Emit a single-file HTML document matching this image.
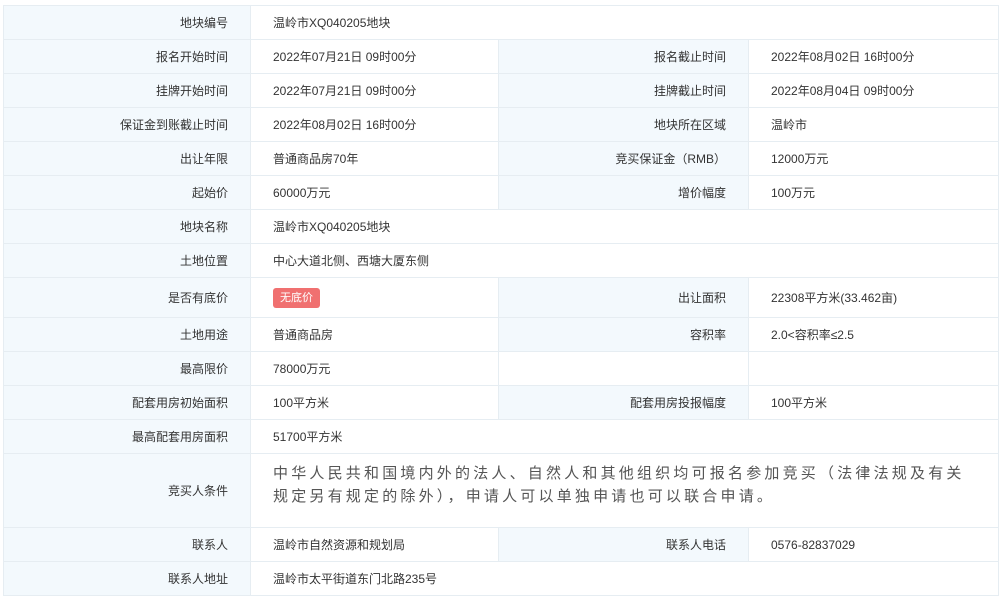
<!DOCTYPE html>
<html><head><meta charset="utf-8"><style>
body{margin:0;background:#fff;font-family:"Liberation Sans","Noto Sans CJK SC",sans-serif;font-size:12px;color:#333}
table{position:absolute;left:3px;top:5px;width:995px;border-collapse:collapse;table-layout:fixed}
td{border:1px solid #e6edf2;height:33px;padding:0;vertical-align:middle}
td.l{background:#f3f9fd;text-align:right;padding-right:22px}
td.v{padding-left:22px}
.tag{display:inline-block;background:#f07070;color:#fff;border-radius:3px;padding:0 7px;height:20px;line-height:20px;font-size:11px}
.cond{font-size:15px;color:#555;letter-spacing:3.2px;line-height:23px;padding-right:30px}
</style></head><body>
<table>
<colgroup><col style="width:247px"><col style="width:248px"><col style="width:250px"><col style="width:250px"></colgroup>
<tr><td class="l">地块编号</td><td class="v" colspan="3">温岭市XQ040205地块</td></tr>
<tr><td class="l">报名开始时间</td><td class="v">2022年07月21日 09时00分</td><td class="l">报名截止时间</td><td class="v">2022年08月02日 16时00分</td></tr>
<tr><td class="l">挂牌开始时间</td><td class="v">2022年07月21日 09时00分</td><td class="l">挂牌截止时间</td><td class="v">2022年08月04日 09时00分</td></tr>
<tr><td class="l">保证金到账截止时间</td><td class="v">2022年08月02日 16时00分</td><td class="l">地块所在区域</td><td class="v">温岭市</td></tr>
<tr><td class="l">出让年限</td><td class="v">普通商品房70年</td><td class="l">竞买保证金（RMB）</td><td class="v">12000万元</td></tr>
<tr><td class="l">起始价</td><td class="v">60000万元</td><td class="l">增价幅度</td><td class="v">100万元</td></tr>
<tr><td class="l">地块名称</td><td class="v" colspan="3">温岭市XQ040205地块</td></tr>
<tr><td class="l">土地位置</td><td class="v" colspan="3">中心大道北侧、西塘大厦东侧</td></tr>
<tr><td class="l" style="height:39px">是否有底价</td><td class="v"><span class="tag">无底价</span></td><td class="l">出让面积</td><td class="v">22308平方米(33.462亩)</td></tr>
<tr><td class="l">土地用途</td><td class="v">普通商品房</td><td class="l">容积率</td><td class="v">2.0&lt;容积率≤2.5</td></tr>
<tr><td class="l">最高限价</td><td class="v">78000万元</td><td></td><td></td></tr>
<tr><td class="l">配套用房初始面积</td><td class="v">100平方米</td><td class="l">配套用房投报幅度</td><td class="v">100平方米</td></tr>
<tr><td class="l">最高配套用房面积</td><td class="v" colspan="3">51700平方米</td></tr>
<tr><td class="l" style="height:73px">竞买人条件</td><td class="v cond" colspan="3"><div style="margin-top:-12px">中华人民共和国境内外的法人、自然人和其他组织均可报名参加竞买（法律法规及有关规定另有规定的除外），申请人可以单独申请也可以联合申请。</div></td></tr>
<tr><td class="l">联系人</td><td class="v">温岭市自然资源和规划局</td><td class="l">联系人电话</td><td class="v">0576-82837029</td></tr>
<tr><td class="l">联系人地址</td><td class="v" colspan="3">温岭市太平街道东门北路235号</td></tr>
</table>
</body></html>
